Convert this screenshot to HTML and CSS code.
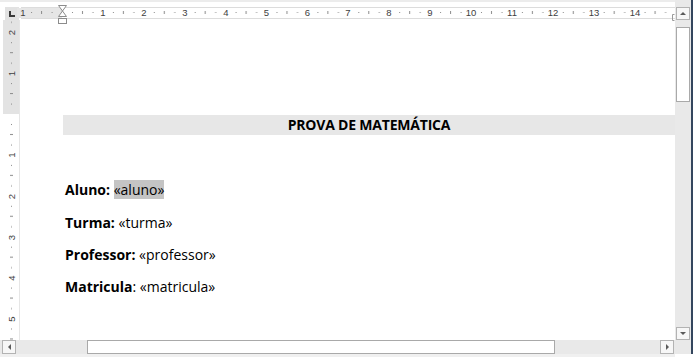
FILE: index.html
```html
<!DOCTYPE html>
<html lang="pt">
<head>
    <meta charset="UTF-8">
    <title>Prova de Matemática</title>
    <link rel="stylesheet" href="styles.css">
</head>
<body>
<div class="app">

    <!-- Tab selector -->
    <div class="corner"><span class="tab-box"><span class="tab-l"></span></span></div>

    <!-- Horizontal ruler -->
    <div class="hruler">
        <svg width="654" height="26" viewBox="0 0 654 26">
            <defs>
                <pattern id="hticks" x="41" y="0" width="40.9" height="20" patternUnits="userSpaceOnUse">
                    <rect x="10" y="12" width="1" height="1" fill="#8a8a8a"/>
                    <rect x="20" y="11" width="1" height="3" fill="#8a8a8a"/>
                    <rect x="30.5" y="12" width="1" height="1" fill="#8a8a8a"/>
                </pattern>
            </defs>
            <rect x="0" y="0" width="654" height="2" fill="#ececec"/>
            <rect x="0" y="7" width="654" height="12" fill="#fff"/>
            <rect x="0" y="7" width="41" height="12" fill="#e6e6e6"/>
            <rect x="0" y="7" width="654" height="1" fill="#dcdcdc"/>
            <rect x="0" y="18" width="654" height="1" fill="#dcdcdc"/>
            <rect x="0" y="7" width="652" height="11" fill="url(#hticks)"/>
            <g class="rnum" text-anchor="middle">
                <rect x="-4" y="8" width="10" height="10" fill="#e6e6e6"/>
                <text x="2" y="16">1</text>
                <rect x="78" y="8" width="9" height="10" fill="#fff"/><text x="82" y="16">1</text>
                <rect x="119" y="8" width="9" height="10" fill="#fff"/><text x="123" y="16">2</text>
                <text x="164" y="16">3</text>
                <text x="205" y="16">4</text>
                <text x="245.5" y="16">5</text>
                <text x="286.5" y="16">6</text>
                <text x="327" y="16">7</text>
                <text x="368" y="16">8</text>
                <text x="409" y="16">9</text>
                <text x="450" y="16">10</text>
                <text x="491" y="16">11</text>
                <text x="532" y="16">12</text>
                <text x="573" y="16">13</text>
                <text x="614" y="16">14</text>
            </g>
            <!-- indent marker -->
            <path d="M37.5 5.5 H45.5 L41.5 11 Z" fill="#fff" stroke="#8c8c8c"/>
            <path d="M41.5 11 L45.5 16.5 H37.5 Z" fill="#fff" stroke="#8c8c8c"/>
            <rect x="37.5" y="18.5" width="8" height="5" fill="#fff" stroke="#8c8c8c"/>
            <!-- right indent -->
            <path d="M653.5 14.5 H651.5 V20.5 H653.5" fill="none" stroke="#9a9a9a"/>
        </svg>
    </div>

    <!-- Vertical scrollbar -->
    <div class="vscroll">
        <div class="sbtn"><span class="arrow up"></span></div>
        <div class="vtrack"><div class="vthumb"></div></div>
        <div class="sbtn"><span class="arrow down"></span></div>
    </div>

    <!-- Vertical ruler -->
    <div class="vruler">
        <svg width="21" height="320" viewBox="0 0 21 320">
            <defs>
                <pattern id="vticks" x="0" y="94" width="21" height="40.9" patternUnits="userSpaceOnUse">
                    <rect x="11" y="10" width="1" height="1" fill="#8a8a8a"/>
                    <rect x="10" y="20" width="3" height="1" fill="#8a8a8a"/>
                    <rect x="11" y="30.5" width="1" height="1" fill="#8a8a8a"/>
                </pattern>
            </defs>
            <rect x="3" y="0" width="17" height="320" fill="#fff"/>
            <rect x="3" y="0" width="17" height="94" fill="#e3e3e3"/>
            <rect x="19" y="0" width="1" height="320" fill="#e6e6e6"/>
            <rect x="3" y="0" width="17" height="320" fill="url(#vticks)"/>
            <g class="rnum" text-anchor="middle">
                <rect x="7" y="8" width="10" height="9" fill="#e3e3e3"/>
                <text transform="translate(14.5 12.5) rotate(-90)">2</text>
                <rect x="7" y="49" width="10" height="9" fill="#e3e3e3"/>
                <text transform="translate(14.5 53.5) rotate(-90)">1</text>
                <rect x="7" y="131" width="10" height="9" fill="#fff"/>
                <text transform="translate(14.5 135) rotate(-90)">1</text>
                <rect x="7" y="172" width="10" height="9" fill="#fff"/>
                <text transform="translate(14.5 176.5) rotate(-90)">2</text>
                <text transform="translate(14.5 217.5) rotate(-90)">3</text>
                <text transform="translate(14.5 258) rotate(-90)">4</text>
                <text transform="translate(14.5 299) rotate(-90)">5</text>
            </g>
        </svg>
    </div>

    <!-- Document page -->
    <div class="page">
        <div class="doc">
            <h1 class="title">PROVA DE MATEMÁTICA</h1>
            <p class="field field-first"><b>Aluno:</b> <span class="merge">«aluno»</span></p>
            <p class="field"><b>Turma:</b> «turma»</p>
            <p class="field"><b>Professor:</b> «professor»</p>
            <p class="field"><b>Matricula</b>: «matricula»</p>
        </div>
    </div>

    <!-- Horizontal scrollbar -->
    <div class="hscroll">
        <div class="sbtn"><span class="arrow left"></span></div>
        <div class="htrack"><div class="hthumb"></div></div>
        <div class="sbtn"><span class="arrow right"></span></div>
    </div>

    <div class="bottom"></div>
</div>
</body>
</html>
```

FILE: styles.css
```css
/* General */
body {
    margin: 0;
    background: #f0f0f0;
    font-family: "Open Sans", Lato, "Noto Sans", sans-serif;
}

.app {
    display: grid;
    grid-template-columns: 21px 654px 18px;
    grid-template-rows: 20px 320px 14px 3px;
    width: 693px;
    height: 357px;
    background: #fff;
    overflow: hidden;
}

/* Rulers */
.corner {
    background: linear-gradient(#ececec 0 2px, #fff 2px);
}

.tab-box {
    display: block;
    width: 14px;
    height: 13px;
    margin: 7px 0 0 5px;
    background: #e2e2e2;
    position: relative;
}

.tab-l {
    position: absolute;
    left: 4px;
    top: 4px;
    width: 4px;
    height: 4px;
    border-left: 2px solid #3a3a3a;
    border-bottom: 2px solid #3a3a3a;
}

.hruler {
    position: relative;
    z-index: 2;
    height: 20px;
}

.hruler svg {
    display: block;
    overflow: visible;
}

.rnum {
    font-family: "Liberation Sans", Arial, sans-serif;
    font-size: 9.5px;
    fill: #404040;
}

.vruler svg {
    display: block;
}

/* Scrollbars */
.vscroll {
    grid-column: 3;
    grid-row: 1 / 4;
    display: flex;
    flex-direction: column;
    padding-top: 7px;
    background: #e9e9e9;
    border-right: 2px solid #34465e;
    box-sizing: border-box;
}

.vscroll .sbtn {
    margin-left: 1px;
}

.vscroll .sbtn:last-child {
    margin-bottom: 14px;
}

.sbtn {
    width: 14px;
    height: 13px;
    box-sizing: border-box;
    border: 1px solid #b3b3b3;
    background: #f7f7f7;
    display: flex;
    align-items: center;
    justify-content: center;
    flex-shrink: 0;
}

.arrow {
    width: 0;
    height: 0;
    border: 3px solid transparent;
}

.arrow.up {
    border-bottom: 3px solid #5b5b5b;
    border-top-width: 0;
}

.arrow.down {
    border-top: 3px solid #5b5b5b;
    border-bottom-width: 0;
}

.arrow.left {
    border-right: 3px solid #5b5b5b;
    border-left-width: 0;
}

.arrow.right {
    border-left: 3px solid #5b5b5b;
    border-right-width: 0;
}

.vtrack {
    flex: 1;
    margin-left: 1px;
    width: 14px;
}

.vthumb {
    margin-top: 7px;
    height: 75px;
    box-sizing: border-box;
    border: 1px solid #a9a9a9;
    background: #fff;
}

.hscroll {
    grid-column: 1 / 3;
    grid-row: 3;
    display: flex;
    padding-left: 2px;
    padding-right: 1px;
    background: #e9e9e9;
}

.hscroll .sbtn {
    height: 14px;
}

.htrack {
    flex: 1;
}

.hthumb {
    margin-left: 71px;
    width: 468px;
    height: 14px;
    box-sizing: border-box;
    border: 1px solid #a9a9a9;
    background: #fff;
}

.bottom {
    grid-column: 1 / 3;
    grid-row: 4;
    background: #f0f0f0;
}

/* Document */
.page {
    background: #fff;
    overflow: hidden;
}

.doc {
    padding-left: 42px;
    padding-top: 95px;
    color: #000;
}

.title {
    margin: 0;
    height: 20px;
    line-height: 20px;
    background: #e7e7e7;
    text-align: center;
    font-size: 14px;
    font-weight: bold;
    letter-spacing: -0.2px;
}

.field {
    margin: 0 0 13px;
    padding-left: 2px;
    font-size: 14px;
    line-height: 19px;
}

.field-first {
    margin-top: 45px;
    margin-bottom: 14px;
}

.field b {
    font-weight: bold;
}

.merge {
    background: #c4c4c4;
}
```
